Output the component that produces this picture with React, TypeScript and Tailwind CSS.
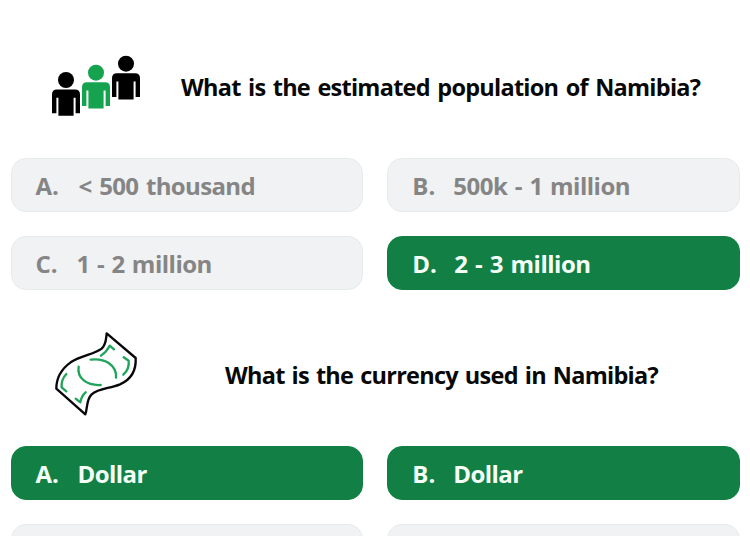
type Option = { letter: string; text: string; correct?: boolean; gap: string; spacing: string };

const populationOptions: Option[] = [
  { letter: 'A.', text: '< 500 thousand', gap: 'w-[43px]', spacing: 'tracking-[-0.65px] [word-spacing:2px]' },
  { letter: 'B.', text: '500k - 1 million', gap: 'w-[41px]', spacing: 'tracking-[-0.5px] [word-spacing:1.7px]' },
  { letter: 'C.', text: '1 - 2 million', gap: 'w-[41px]', spacing: 'tracking-[-0.5px] [word-spacing:1.5px]' },
  { letter: 'D.', text: '2 - 3 million', correct: true, gap: 'w-[42px]', spacing: 'tracking-[-0.5px] [word-spacing:1.8px]' },
];

const currencyOptions: Option[] = [
  { letter: 'A.', text: 'Dollar', correct: true, gap: 'w-[42px]', spacing: 'tracking-[-0.55px]' },
  { letter: 'B.', text: 'Dollar', correct: true, gap: 'w-[41px]', spacing: 'tracking-[-0.55px]' },
  { letter: '', text: '', gap: 'w-[41px]', spacing: '' },
  { letter: '', text: '', gap: 'w-[41px]', spacing: '' },
];

function Person({ x, y, color }: { x: number; y: number; color: string }) {
  return (
    <g transform={`translate(${x} ${y})`} fill={color}>
      <circle cx="14" cy="8.2" r="8" />
      <path d="M5 17.8h18q5 0 5 5V41.5h-4.4V26h-2v18H6.4V26h-2v15.5H0V22.8q0-5 5-5Z" />
    </g>
  );
}

function PeopleIcon() {
  return (
    <svg className="h-[62px] w-[90px] shrink-0" viewBox="0 0 90 62">
      <Person x={1} y={16.8} color="#000" />
      <Person x={31} y={9.5} color="#16a34f" />
      <Person x={61} y={0.5} color="#000" />
    </svg>
  );
}

function BanknoteIcon() {
  return (
    <svg className="h-[95px] w-[100px] shrink-0" viewBox="0 0 300 285" fill="none" strokeLinejoin="round" strokeLinecap="round">
      <path
        d="M185 25 272 99C274 136 257 164 225 178C193 191 161 190 140 208C123 224 128 250 121 268L34 191C34 158 49 132 77 112C108 91 149 88 170 71C184 58 183 41 185 25Z"
        stroke="#080808"
        strokeWidth="7"
      />
      <g stroke="#20a45b" strokeWidth="7">
        <path d="M137 104C179 98 216 121 213 158" />
        <path d="M101 125C95 160 126 182 167 180" />
        <path d="M168 92Q185 80 194 62L207 73" />
        <path d="M236 97 251 107Q254 132 235 149" />
        <path d="M64 147Q48 164 50 187L64 199" />
        <path d="M92 221 106 232Q109 213 122 202" />
      </g>
    </svg>
  );
}

function OptionCard({ option }: { option: Option }) {
  return (
    <div
      className={`flex h-[54px] items-center rounded-[15px] border pt-0.5 pl-6 text-[24px] leading-[54px] font-bold whitespace-nowrap ${
        option.correct
          ? 'border-[#128044] bg-[#128044] text-[#f5fff8]'
          : 'border-[#e7eaeb] bg-[#f0f2f4] text-[#858585]'
      }`}
    >
      <span className={`shrink-0 ${option.gap}`}>{option.letter}</span>
      <span className={option.spacing}>{option.text}</span>
    </div>
  );
}

function OptionGrid({ options }: { options: Option[] }) {
  return (
    <div className="grid grid-cols-2 gap-6 pr-[10px] pl-[10.5px]">
      {options.map((option, i) => (
        <OptionCard key={i} option={option} />
      ))}
    </div>
  );
}

export default function App() {
  return (
    <main className="h-[536px] w-[750px] overflow-hidden bg-white font-['Open_Sans','Noto_Sans',sans-serif]">
      <section>
        <header className="flex h-[157.5px] items-start pt-[55px] pl-[51px]">
          <PeopleIcon />
          <h2 className="mt-[16px] ml-[40px] text-[23.5px] leading-8 font-bold tracking-[-0.74px] [word-spacing:2px] whitespace-nowrap text-[#080808]">
            What is the estimated population of Namibia?
          </h2>
        </header>
        <OptionGrid options={populationOptions} />
      </section>
      <section>
        <header className="flex h-[156.5px] items-start pt-[35.5px] pl-[45px]">
          <BanknoteIcon />
          <h2 className="mt-[34px] ml-[80px] text-[23.5px] leading-8 font-bold tracking-[-0.74px] [word-spacing:1.6px] whitespace-nowrap text-[#080808]">
            What is the currency used in Namibia?
          </h2>
        </header>
        <OptionGrid options={currencyOptions} />
      </section>
    </main>
  );
}
